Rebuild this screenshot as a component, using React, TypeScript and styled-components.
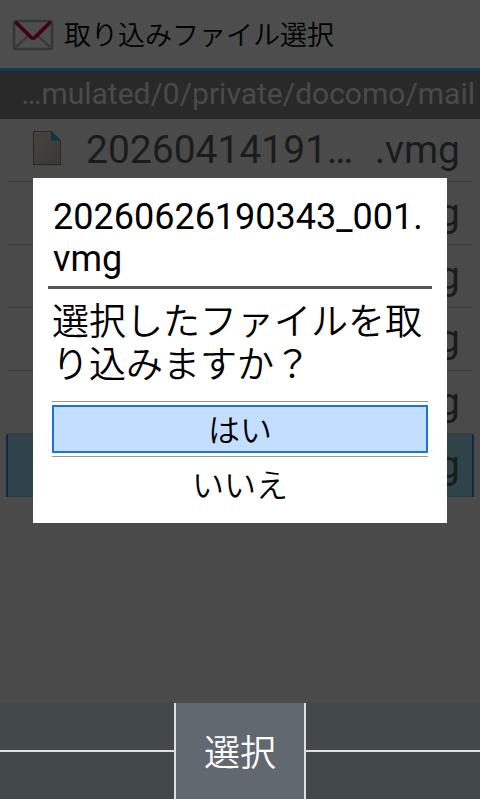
import React from "react";
import styled, { createGlobalStyle } from "styled-components";

const GlobalStyle = createGlobalStyle`
  * { box-sizing: border-box; }
  body {
    margin: 0;
    font-family: Roboto, "Noto Sans CJK JP", sans-serif;
    background: #4a4a4a;
  }
  button { font: inherit; cursor: pointer; }
`;

const japaneseFont = `"Noto Sans CJK JP", sans-serif`;

const Screen = styled.div`
  display: flex;
  flex-direction: column;
  min-height: 100vh;
`;

const Content = styled.div`
  position: relative;
  flex: 1;
`;

const Header = styled.header`
  display: flex;
  align-items: center;
  gap: 10px;
  height: 71px;
  padding: 2px 12px 0;
  background: #4d4d4d;
  border-bottom: 3px solid #103d4d;
`;

const Title = styled.h1`
  margin: 0;
  padding-bottom: 2px;
  font-family: ${japaneseFont};
  font-size: 27px;
  font-weight: 350;
  line-height: 40px;
  color: #000;
`;

const PathBar = styled.div`
  height: 48px;
  padding: 0 5px;
  font-size: 30px;
  line-height: 46px;
  text-align: right;
  white-space: nowrap;
  color: #4a4a4a;
  background: #292929;
`;

const FileList = styled.ul`
  margin: 0;
  padding: 0 6px;
  list-style: none;
`;

const FileRow = styled.li<{ $selected?: boolean }>`
  height: 63px;
  border: solid ${(p) => (p.$selected ? "#10294b" : "transparent")};
  border-width: 0 2px;
`;

const FileButton = styled.button<{ $selected?: boolean }>`
  display: flex;
  align-items: center;
  width: 100%;
  height: 63px;
  padding: 0 12px 0 16px;
  border: 0;
  border-bottom: 1px solid ${(p) => (p.$selected ? "#263d47" : "#3c3c3c")};
  background: ${(p) => (p.$selected ? "#30434b" : "transparent")};
  color: #1a1b1d;
  font-size: 39px;
  line-height: 62px;
  text-align: left;
`;

const FileName = styled.span`
  flex: 1;
  min-width: 0;
  margin: 0 12px 0 14px;
  overflow: hidden;
  text-overflow: ellipsis;
  white-space: nowrap;
`;

const Scrim = styled.div`
  position: absolute;
  inset: 0;
  display: flex;
  align-items: center;
  justify-content: center;
  padding: 0 33px 2px;
`;

const Dialog = styled.section`
  width: 100%;
  padding: 18px 15px 12px;
  background: #fff;
  color: #000;
`;

const DialogTitle = styled.h2`
  margin: 0;
  padding: 0 5px 6px;
  border-bottom: 3px solid #555;
  font-size: 36px;
  font-weight: 400;
  line-height: 42px;
  word-break: break-all;
`;

const Message = styled.p`
  margin: 0;
  padding: 9px 4px 17px;
  font-family: ${japaneseFont};
  font-size: 37px;
  font-weight: 350;
  line-height: 43px;
`;

const Actions = styled.div`
  display: flex;
  flex-direction: column;
  margin: 0 4px;
`;

const Action = styled.div`
  padding: 3px 0;
  border-top: 1px solid #929b9b;
`;

const ActionButton = styled.button<{ $focused?: boolean }>`
  display: block;
  width: 100%;
  height: 48px;
  padding: 0 0 2px;
  border: 2px solid ${(p) => (p.$focused ? "#1b74dc" : "transparent")};
  background: ${(p) => (p.$focused ? "#c4deff" : "transparent")};
  color: #000;
  font-family: ${japaneseFont};
  font-size: 32px;
  font-weight: 350;
  line-height: 42px;
`;

const SoftKeys = styled.footer`
  display: grid;
  grid-template-columns: 1fr 132px 1fr;
  height: 96px;
  background: #43494b;
`;

const SideKeys = styled.div`
  height: 49px;
  border-bottom: 2px solid #dcdfe0;
`;

const CenterKey = styled.button`
  padding: 0 0 2px;
  border: solid #dcdfe0;
  border-width: 0 2px;
  background: #61686f;
  color: #fff;
  font-family: ${japaneseFont};
  font-size: 36px;
  font-weight: 350;
`;

const MailIcon = () => (
  <svg width="42" height="32" viewBox="0 0 42 32" fill="none" aria-hidden="true">
    <rect x="2" y="2" width="38" height="28" rx="2" stroke="#363636" strokeWidth="2.6" />
    <path d="M4 28 16 17M38 28 26 17" stroke="#363636" strokeWidth="2.2" />
    <path d="M4.5 4 19 18.4Q21 20 23 18.4L37.5 4" stroke="#400010" strokeWidth="3.6" strokeLinecap="round" />
  </svg>
);

const FileIcon = () => (
  <svg width="48" height="48" viewBox="0 0 48 48" aria-hidden="true">
    <defs>
      <linearGradient id="paper" x1="0" y1="0" x2="1" y2="1">
        <stop offset="0" stopColor="#45443f" />
        <stop offset="1" stopColor="#3b3933" />
      </linearGradient>
      <radialGradient id="shade">
        <stop offset="0" stopColor="#1c1c1c" />
        <stop offset="1" stopColor="#4a4a4a" stopOpacity="0" />
      </radialGradient>
    </defs>
    <ellipse cx="25" cy="38.5" rx="22" ry="1.6" fill="url(#shade)" />
    <path d="M9.5 5.5H27l9.5 9V38.5h-27z" fill="url(#paper)" stroke="#272725" />
    <path d="M27.5 6v8H36z" fill="#053d50" stroke="#162b31" strokeWidth=".7" />
  </svg>
);

const files = [
  { id: 1, name: "20260414191…", ext: ".vmg" },
  { id: 2, name: "20260414191…", ext: ".vmg" },
  { id: 3, name: "20260414191…", ext: ".vmg" },
  { id: 4, name: "20260414191…", ext: ".vmg" },
  { id: 5, name: "20260414191…", ext: ".vmg" },
  { id: 6, name: "20260626190…", ext: ".vmg", selected: true },
];

export default function App() {
  return (
    <Screen>
      <GlobalStyle />
      <Content>
        <Header>
          <MailIcon />
          <Title>取り込みファイル選択</Title>
        </Header>
        <PathBar>…mulated/0/private/docomo/mail</PathBar>
        <FileList>
          {files.map((f) => (
            <FileRow key={f.id} $selected={f.selected}>
              <FileButton type="button" $selected={f.selected}>
                <FileIcon />
                <FileName>{f.name}</FileName>
                <span>{f.ext}</span>
              </FileButton>
            </FileRow>
          ))}
        </FileList>
        <Scrim>
          <Dialog role="dialog" aria-modal="true" aria-labelledby="dialog-title">
            <DialogTitle id="dialog-title">20260626190343_001.vmg</DialogTitle>
            <Message>選択したファイルを取り込みますか？</Message>
            <Actions>
              <Action>
                <ActionButton type="button" $focused>はい</ActionButton>
              </Action>
              <Action>
                <ActionButton type="button">いいえ</ActionButton>
              </Action>
            </Actions>
          </Dialog>
        </Scrim>
      </Content>
      <SoftKeys>
        <SideKeys />
        <CenterKey type="button">選択</CenterKey>
        <SideKeys />
      </SoftKeys>
    </Screen>
  );
}
